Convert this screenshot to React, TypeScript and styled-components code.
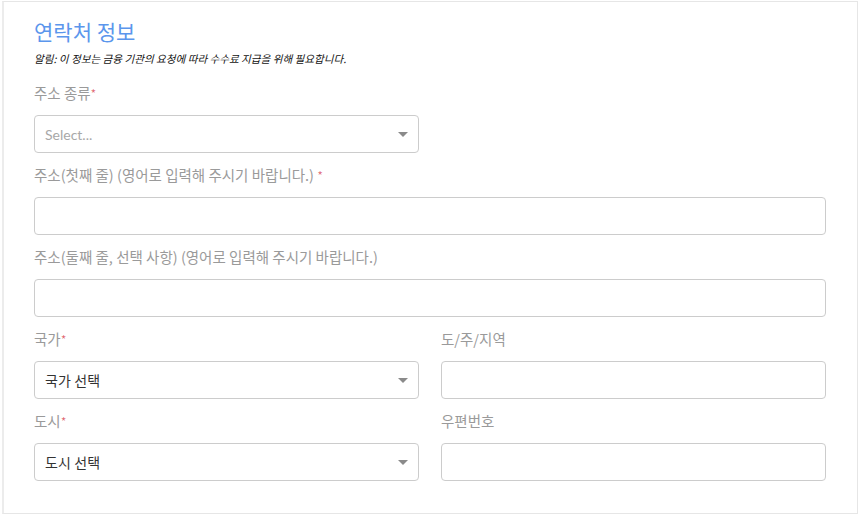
import styled, { createGlobalStyle } from 'styled-components';

const GlobalStyle = createGlobalStyle`
  html, body {
    margin: 0;
    padding: 0;
    background: #ffffff;
  }
  body {
    font-family: Lato, "Noto Sans CJK KR", sans-serif;
  }
`;

interface FieldProps {
  label: string;
  required?: boolean;
  kind: 'select' | 'input';
  value?: string;
  placeholder?: string;
}

const Field = ({ label, required, kind, value, placeholder }: FieldProps) => {
  return (
    <FieldBox>
      <Label>
        {label}
        {required && <Star>*</Star>}
      </Label>
      {kind === 'select' ? (
        <SelectBox>
          <SelectText $placeholder={!value}>{value ?? placeholder}</SelectText>
          <Caret />
        </SelectBox>
      ) : (
        <TextInput type="text" />
      )}
    </FieldBox>
  );
};

const App = () => {
  return (
    <>
      <GlobalStyle />
      <Panel>
        <Title>연락처 정보</Title>
        <Notice>알림: 이 정보는 금융 기관의 요청에 따라 수수료 지급을 위해 필요합니다.</Notice>
        <Form>
          <Half>
            <Field label="주소 종류" required kind="select" placeholder="Select..." />
          </Half>
          <Wide>
            <Field label="주소(첫째 줄) (영어로 입력해 주시기 바랍니다.) " required kind="input" />
          </Wide>
          <Wide>
            <Field label="주소(둘째 줄, 선택 사항) (영어로 입력해 주시기 바랍니다.)" kind="input" />
          </Wide>
          <Field label="국가" required kind="select" value="국가 선택" />
          <Field label="도/주/지역" kind="input" />
          <Field label="도시" required kind="select" value="도시 선택" />
          <Field label="우편번호" kind="input" />
        </Form>
      </Panel>
    </>
  );
};

const Panel = styled.div`
  margin: 1px 1px 0 2px;
  border: 1px solid #e6e6e6;
  border-left: 2px solid #ececec;
  padding: 13px 31px 31px 30px;
  background: #ffffff;
  box-sizing: border-box;
  height: 513px;
`;

const Title = styled.h2`
  margin: 0;
  font-family: "Noto Sans CJK KR", sans-serif;
  font-size: 21px;
  line-height: 32px;
  font-weight: 400;
  color: #5b96ec;
`;

const Notice = styled.p`
  margin: 5px 0 0;
  font-family: "Noto Sans CJK KR", sans-serif;
  font-size: 10.6px;
  line-height: 14px;
  font-style: italic;
  color: #111111;
`;

const Form = styled.div`
  margin-top: 17px;
  display: grid;
  grid-template-columns: 1fr 1fr;
  column-gap: 22px;
  row-gap: 12px;
`;

const Half = styled.div`
  grid-column: 1 / 2;
`;

const Wide = styled.div`
  grid-column: 1 / 3;
`;

const FieldBox = styled.div`
  display: flex;
  flex-direction: column;
  gap: 12px;
`;

const Label = styled.label`
  display: block;
  height: 20px;
  overflow: visible;
  font-family: "Noto Sans CJK KR", sans-serif;
  font-size: 14.5px;
  line-height: 20px;
  color: #9a9a9a;
  white-space: pre;
`;

const Star = styled.span`
  font-size: 13px;
  line-height: 1;
  font-weight: 300;
  color: #dd5a68;
`;

const SelectBox = styled.div`
  position: relative;
  height: 38px;
  box-sizing: border-box;
  border: 1px solid #cccccc;
  border-radius: 4px;
  display: flex;
  align-items: center;
  padding: 0 10px;
  background: #ffffff;
`;

const SelectText = styled.span<{ $placeholder: boolean }>`
  flex: 1;
  font-size: 14px;
  color: ${({ $placeholder }) => ($placeholder ? '#a8a8a8' : '#333333')};
`;

const Caret = styled.span`
  width: 0;
  height: 0;
  border-left: 5px solid transparent;
  border-right: 5px solid transparent;
  border-top: 5px solid #8a8a8a;
`;

const TextInput = styled.input`
  height: 38px;
  box-sizing: border-box;
  border: 1px solid #cccccc;
  border-radius: 4px;
  padding: 0 10px;
  font-size: 14px;
  outline: none;
  background: #ffffff;
`;

export default App;
